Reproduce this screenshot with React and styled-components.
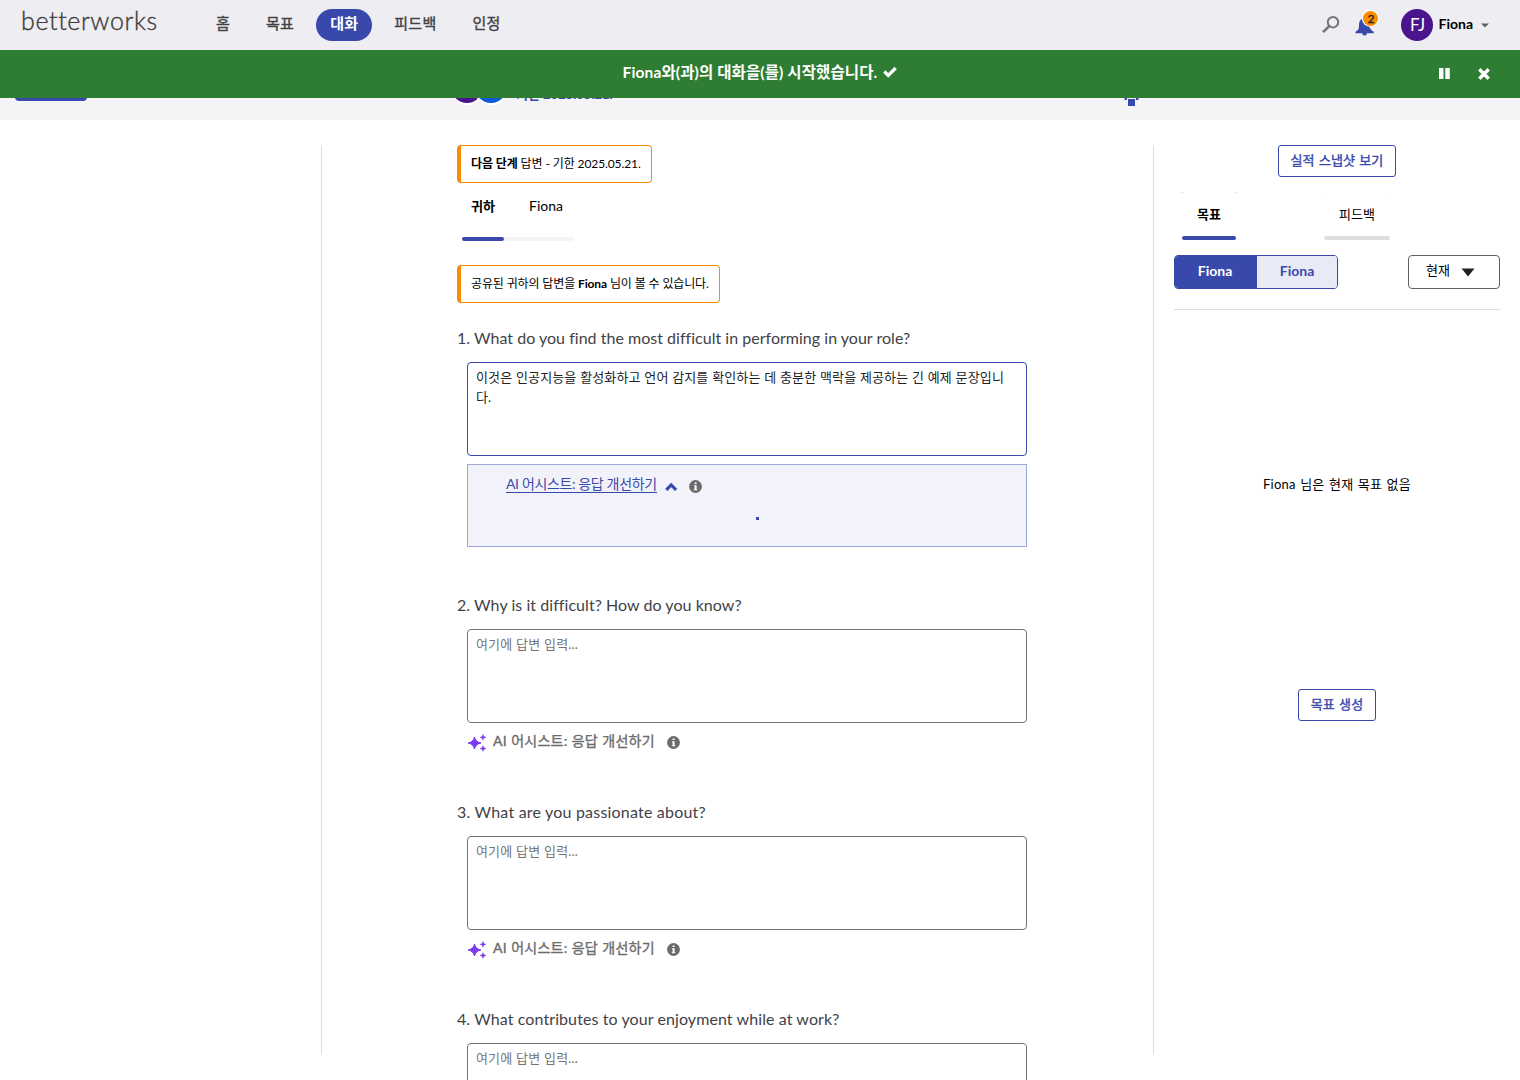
import React from 'react';
import styled, { createGlobalStyle, css } from 'styled-components';

const indigo = '#3949ab';
const Global = createGlobalStyle`
  *{box-sizing:border-box}
  html,body{margin:0;height:1080px;overflow:hidden;background:#fff}
  body{font-family:Lato,"Noto Sans CJK KR",sans-serif;font-size:13px;color:#000}
  button,textarea{font-family:inherit;margin:0}
`;
const Page = styled.div`height:1080px;display:flex;flex-direction:column;overflow:hidden;`;
const T = styled.span`
  white-space:nowrap;line-height:20px;
  font-size:${p => p.$s || 13}px;font-weight:${p => p.$w || 400};
  letter-spacing:${p => p.$ls || 0}px;word-spacing:${p => p.$ws || 0}px;
  color:${p => p.$c || 'inherit'};
`;
const Header = styled.header`height:50px;flex:none;background:#eeedf2;display:flex;align-items:flex-start;`;
const Logo = styled.div`width:179px;padding:5px 0 0 21px;font-size:25px;line-height:30px;font-weight:300;letter-spacing:.6px;color:#3c3c3c;-webkit-text-stroke:.35px #3c3c3c;`;
const Nav = styled.nav`display:flex;padding-top:9px;gap:8px;margin-left:23px;`;
const NavItem = styled.a`
  height:32px;line-height:28px;padding:0 14px;border-radius:16px;font-size:15px;white-space:nowrap;
  letter-spacing:.25px;color:#424246;-webkit-text-stroke:.4px currentColor;
  ${p => p.$active && css`background:${indigo};color:#fff;font-weight:700;-webkit-text-stroke:0;`}
`;
const Tools = styled.div`margin-left:auto;display:flex;align-items:center;height:50px;padding-right:31px;`;
const UserName = styled.div`height:22px;margin-right:8px;`;
const Bell = styled.div`position:relative;width:24px;height:26px;margin-left:14px;`;
const BellIcon = styled.svg`display:block;width:20px;height:24px;margin:1px 0 0 1px;`;
const Badge = styled.span`
  position:absolute;left:9px;top:-1px;width:15px;height:15px;border-radius:50%;background:#fb8c00;box-shadow:0 0 0 1px #fff;
  font-size:12px;line-height:15px;text-align:center;color:#222;-webkit-text-stroke:.3px #222;
`;
const Avatar = styled.div`width:32px;height:32px;border-radius:50%;background:#4a148c;color:#fff;font-size:17px;line-height:31px;text-align:center;margin:0 5px 0 23px;`;
const Banner = styled.div`height:48px;flex:none;background:#2e7d32;color:#fff;display:grid;grid-template-columns:1fr auto 1fr;padding-top:12px;`;
const Message = styled.div`display:flex;gap:6px;svg{margin-top:4px}`;
const Controls = styled.div`display:flex;justify-content:flex-end;gap:27px;padding:5px 30px 0 0;`;
const SubHeader = styled.div`height:22px;flex:none;overflow:hidden;background:#f4f4f7;display:flex;align-items:flex-start;padding-left:15px;`;
const BackButton = styled.div`width:72px;height:32px;margin-top:-29px;border-radius:4px;background:${indigo};flex:none;`;
const Mini = styled.div`width:36px;height:36px;margin-top:-29px;margin-left:${p => p.$ml}px;border:2px solid #fff;border-radius:50%;background:${p => p.$c};flex:none;`;
const Due = styled.div`margin:-14px 0 0 7px;width:100px;flex:none;`;
const Columns = styled.main`flex:none;height:935px;margin-top:25px;display:flex;`;
const Left = styled.aside`width:322px;border-right:1px solid #dcdcde;flex:none;height:910px;`;
const Center = styled.section`width:832px;border-right:1px solid #dcdcde;flex:none;height:910px;padding-left:135px;`;
const Right = styled.aside`width:366px;padding:0 20px;display:flex;flex-direction:column;`;
const Callout = styled.div`
  width:${p => p.$w}px;height:38px;border:1px solid #fb8c00;border-left-width:4px;border-radius:4px;padding:8px 0 0 10px;
`;
const Tabs = styled.div`display:flex;margin:13px 0 24px 5px;height:45px;width:111px;border-radius:2px;background:linear-gradient(#f4f4f7,#f4f4f7) bottom/100% 4px no-repeat;`;
const Bar = styled.div`height:4px;border-radius:2px;background:${p => p.$c};margin-top:auto;`;
const Tab = styled.div`width:${p => p.$w}px;display:flex;flex-direction:column;`;
const TabLabel = styled.div`padding-left:${p => p.$pl || 0}px;text-align:${p => (p.$pl ? 'left' : 'center')};line-height:20px;`;
const Questions = styled.div`height:777px;overflow:visible;padding-top:25px;display:flex;flex-direction:column;`;
const Question = styled.div`display:flex;flex-direction:column;height:${p => p.$h}px;flex:none;`;
const Answer = styled.textarea`
  margin:14px 0 0 10px;width:560px;height:94px;flex:none;resize:none;outline:none;border-radius:4px;background:#fff;overflow:hidden;
  border:1px solid ${p => (p.$focus ? indigo : '#757575')};padding:4px 8px;font-size:13px;line-height:20px;color:#222226;
  letter-spacing:.14px;word-spacing:.2px;word-break:break-all;
  &::placeholder{color:#757575;opacity:1;word-spacing:.3px}
`;
const Assist = styled.div`display:flex;align-items:flex-start;margin:8px 0 0 11px;height:24px;svg{flex:none}`;
const AssistLabel = styled.span`
  margin:0 12px 0 6px;font-size:14px;line-height:20px;letter-spacing:.24px;word-spacing:.5px;color:#6b6b6b;white-space:nowrap;
  -webkit-text-stroke:.35px #6b6b6b;
`;
const AssistPanel = styled.div`width:560px;height:83px;margin:8px 0 0 10px;border:1px solid #9fa8da;background:#f2f3fa;display:flex;flex-direction:column;align-items:center;`;
const AssistHead = styled.div`display:flex;align-items:flex-start;width:100%;padding:10px 0 0 38px;svg{flex:none}`;
const AssistLink = styled.a`color:${indigo};border-bottom:1px solid ${indigo};height:18px;line-height:18px;font-size:14px;letter-spacing:-.36px;white-space:nowrap;`;
const Loader = styled.div`width:3px;height:3px;background:${indigo};margin:22px 0 0 20px;`;
const Outline = styled.button`
  align-self:center;width:${p => p.$w}px;height:32px;border:1px solid ${indigo};border-radius:3px;background:#fff;color:${indigo};
  font-size:13px;line-height:28px;padding:0 0 2px;white-space:nowrap;letter-spacing:.1px;word-spacing:.8px;-webkit-text-stroke:.4px ${indigo};
`;
const SideTabs = styled.div`display:flex;margin:14px 0 0 8px;height:49px;gap:88px;`;
const SideTab = styled.div`
  width:${p => p.$w}px;display:flex;flex-direction:column;padding-top:13px;
  background:linear-gradient(${p => p.$dot},${p => p.$dot}) 0 1px/1px 1px no-repeat,linear-gradient(${p => p.$dot},${p => p.$dot}) 100% 1px/1px 1px no-repeat;
`;
const Filter = styled.div`display:flex;justify-content:space-between;height:70px;padding-top:15px;border-bottom:1px solid #dcdcde;margin-bottom:164px;`;
const Toggle = styled.div`display:flex;width:164px;height:34px;border:1px solid ${indigo};border-radius:4px;overflow:hidden;`;
const Option = styled.div`flex:${p => (p.$on ? '0 0 82px' : '1')};text-align:center;padding:5px ${p => (p.$on ? 2 : 0)}px 0 0;background:${p => (p.$on ? indigo : '#e8eaf6')};color:${p => (p.$on ? '#fff' : indigo)};`;
const Select = styled.div`width:92px;height:34px;border:1px solid #616161;border-radius:4px;display:flex;padding:4px 0 0 17px;gap:11.500px;svg{margin-top:8px}`;
const Empty = styled.div`height:215px;text-align:center;`;

const InfoIcon = styled.svg`width:13px;height:13px;margin-top:${p => p.$mt}px;`;
const Info = ({ mt }) => (
  <InfoIcon $mt={mt} viewBox="0 0 13 13">
    <circle cx="6.5" cy="6.5" r="6.4" fill="#6b6b6b" />
    <path d="M5.600 2.400h2v1.700h-2zM5 5.200h2.600v4h.7v1H4.800v-1h.8v-3H5z" fill="#fff" />
  </InfoIcon>
);
const SparkleIcon = styled.svg`width:19px;height:19px;margin-top:2px;`;
const Sparkle = () => (
  <SparkleIcon viewBox="0 0 19 19" fill="#7c3aed">
    <path d="M6.500 4Q7.500 9 13 10Q7.500 11 6.500 16Q5.500 11 0 10Q5.500 9 6.500 4z" stroke="#7c3aed" strokeWidth="1" strokeLinejoin="round" />
    <path d="M15 1.200l.9 2.200 2.200.9-2.200.9L15 7.400l-.9-2.200-2.200-.9 2.200-.9zM15 12.400l.9 2.200 2.200.9-2.200.9-.9 2.200-.9-2.200-2.200-.9 2.200-.9z" stroke="#7c3aed" strokeWidth=".3" />
  </SparkleIcon>
);

const AssistLine = () => (
  <Assist>
    <Sparkle />
    <AssistLabel>AI 어시스트: 응답 개선하기</AssistLabel>
    <Info mt={5} />
  </Assist>
);

const questions = [
  { text: '2. Why is it difficult? How do you know?', tracking: 0.05 },
  { text: '3. What are you passionate about?', tracking: 0.2 },
  { text: '4. What contributes to your enjoyment while at work?', tracking: 0.09 },
];

export default function App() {
  return (
    <Page>
      <Global />
      <Header>
        <Logo>betterworks</Logo>
        <Nav>
          <NavItem>홈</NavItem><NavItem>목표</NavItem><NavItem $active>대화</NavItem><NavItem>피드백</NavItem><NavItem>인정</NavItem>
        </Nav>
        <Tools>
          <svg width="18" height="18" viewBox="0 0 18 18" fill="none" stroke="#757575"><circle cx="11" cy="6.200" r="5.200" strokeWidth="2" /><path d="M7.200 10.100L1.800 15.400" strokeWidth="2.600" strokeLinecap="round" /></svg>
          <Bell>
            <BellIcon viewBox="0 0 20 24"><path fill={indigo} d="M9 4.500c1 0 1.400.6 1.400 1.300 3.100.7 4.100 3.200 4.100 6.200 0 3.500 1.200 4.800 4.300 6.800v1.400H12a2.400 2.400 0 0 1-4.800 0H.5v-1.400C3.800 16.800 4 15.500 4 12c0-3 1-5.500 3.700-6.200 0-.7.5-1.300 1.300-1.300z" /></BellIcon>
            <Badge>2</Badge>
          </Bell>
          <Avatar>FJ</Avatar>
          <UserName><T $s={14} $w={700}>Fiona</T></UserName>
          <svg width="8" height="5" viewBox="0 0 8 5"><path d="M0 .5h8l-4 4z" fill="#616161" /></svg>
        </Tools>
      </Header>
      <Banner>
        <i />
        <Message>
          <T $s={15.5} $w={700} $ls={0.12}>Fiona와(과)의 대화을(를) 시작했습니다.</T>
          <svg width="14" height="12" viewBox="0 0 14 12"><path d="M1.300 5.500l3.900 3.900L12.700 2" fill="none" stroke="#fff" strokeWidth="3.200" /></svg>
        </Message>
        <Controls>
          <svg width="11" height="13" viewBox="0 0 11 13"><path d="M0 1h4.500v11H0zM6.300 1h4.500v11H6.300z" fill="#fff" /></svg>
          <svg width="13" height="13" viewBox="0 0 13 13"><path d="M2.300 2.300l9.400 9.400M11.700 2.300l-9.400 9.400" stroke="#fff" strokeWidth="3.400" /></svg>
        </Controls>
      </Banner>
      <SubHeader>
        <BackButton />
        <Mini $ml={362} $c="#4a148c" /><Mini $ml={-12} $c="#0b5cd5" />
        <Due><T $s={13} $w={700} $c={indigo}>기한 2025.05.21.</T></Due>
        <svg width="530" height="9" viewBox="0 0 530 9"><path d="M508.500 0h2.500v2h-2.500zM520 0h2.500v2H520zM512 1h7v7h-7z" fill={indigo} /></svg>
      </SubHeader>
      <Columns>
        <Left />
        <Center>
          <Callout $w={195}><T $s={12} $ls={-0.1}><b>다음 단계</b> 답변 - 기한 2025.05.21.</T></Callout>
          <Tabs>
            <Tab $w={42}><TabLabel $pl={9}><T $w={700}>귀하</T></TabLabel><Bar $c={indigo} /></Tab>
            <Tab $w={69}><TabLabel $pl={25}><T $s={14}>Fiona</T></TabLabel></Tab>
          </Tabs>
          <Callout $w={263}><T $s={12} $ls={-0.13}>공유된 귀하의 답변을 <b>Fiona</b> 님이 볼 수 있습니다.</T></Callout>
          <Questions>
            <Question $h={267}>
              <T $s={16} $c="#424246" $ls={0.02}>1. What do you find the most difficult in performing in your role?</T>
              <Answer $focus readOnly value="이것은 인공지능을 활성화하고 언어 감지를 확인하는 데 충분한 맥락을 제공하는 긴 예제 문장입니다." />
              <AssistPanel>
                <AssistHead>
                  <AssistLink>AI 어시스트: 응답 개선하기</AssistLink>
                  <svg width="32" height="20" viewBox="0 0 32 20"><path d="M9.300 14.800l4.900-4.900 4.900 4.900" fill="none" stroke={indigo} strokeWidth="3.200" /></svg>
                  <Info mt={5} />
                </AssistHead>
                <Loader />
              </AssistPanel>
            </Question>
            {questions.map(q => (
              <Question key={q.text} $h={207}>
                <T $s={16} $c="#424246" $ls={q.tracking}>{q.text}</T>
                <Answer readOnly placeholder="여기에 답변 입력..." />
                <AssistLine />
              </Question>
            ))}
          </Questions>
        </Center>
        <Right>
          <Outline $w={118}>실적 스냅샷 보기</Outline>
          <SideTabs>
            <SideTab $w={54} $dot="#c5cae9"><TabLabel><T $w={700}>목표</T></TabLabel><Bar $c={indigo} /></SideTab>
            <SideTab $w={66} $dot="#f0f0f2"><TabLabel><T>피드백</T></TabLabel><Bar $c="#dedede" /></SideTab>
          </SideTabs>
          <Filter>
            <Toggle>
              <Option $on><T $s={14} $w={700}>Fiona</T></Option>
              <Option><T $s={14} $w={700}>Fiona</T></Option>
            </Toggle>
            <Select><T>현재</T><svg width="14" height="9" viewBox="0 0 14 9"><path d="M.5.500h13L7 8.500z" fill="#222" /></svg></Select>
          </Filter>
          <Empty><T $ls={0.25} $ws={0.8}>Fiona 님은 현재 목표 없음</T></Empty>
          <Outline $w={78}>목표 생성</Outline>
        </Right>
      </Columns>
    </Page>
  );
}
